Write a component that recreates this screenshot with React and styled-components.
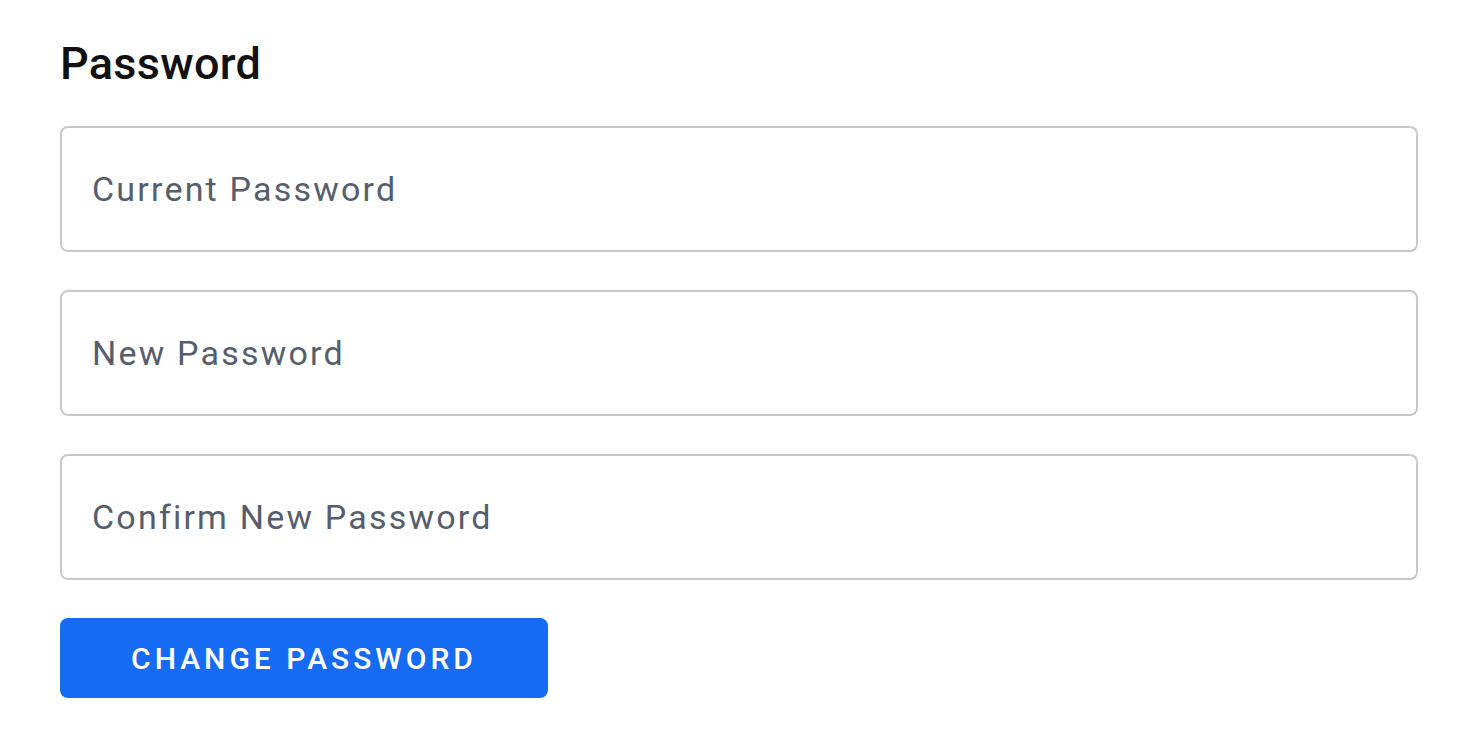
import React from "react";
import styled, { createGlobalStyle } from "styled-components";

const GlobalStyle = createGlobalStyle`
  html, body {
    margin: 0;
    padding: 0;
    background: #ffffff;
  }
  body {
    font-family: Roboto, "Liberation Sans", sans-serif;
  }
`;

export default function App() {
  return (
    <>
      <GlobalStyle />
      <PasswordForm>
        <h2>Password</h2>
        <Field type="password" placeholder="Current Password" />
        <Field type="password" placeholder="New Password" />
        <Field type="password" placeholder="Confirm New Password" />
        <SubmitButton type="button">Change Password</SubmitButton>
      </PasswordForm>
    </>
  );
}

const PasswordForm = styled.form`
  display: flex;
  flex-direction: column;
  align-items: flex-start;
  padding: 38px 62px 0 60px;
  h2 {
    margin: 0 0 36px;
    font-family: Roboto, "Liberation Sans", sans-serif;
    font-size: 45px;
    font-weight: 500;
    line-height: 52px;
    letter-spacing: 0.3px;
    color: #111111;
  }
`;

const Field = styled.input`
  box-sizing: border-box;
  width: 100%;
  height: 126px;
  margin-bottom: 38px;
  padding: 0 30px;
  border: 2px solid #c8c8c8;
  border-radius: 8px;
  background: #ffffff;
  font-family: Roboto, "Liberation Sans", sans-serif;
  font-size: 34px;
  letter-spacing: 2.2px;
  color: #222;
  outline: none;
  &::placeholder {
    color: #565d6c;
    opacity: 1;
  }
`;

const SubmitButton = styled.button`
  width: 488px;
  height: 80px;
  border: none;
  border-radius: 8px;
  background: #156bf4;
  color: #ffffff;
  font-family: Roboto, "Liberation Sans", sans-serif;
  font-size: 30px;
  font-weight: 500;
  letter-spacing: 4px;
  text-transform: uppercase;
  cursor: pointer;
`;
